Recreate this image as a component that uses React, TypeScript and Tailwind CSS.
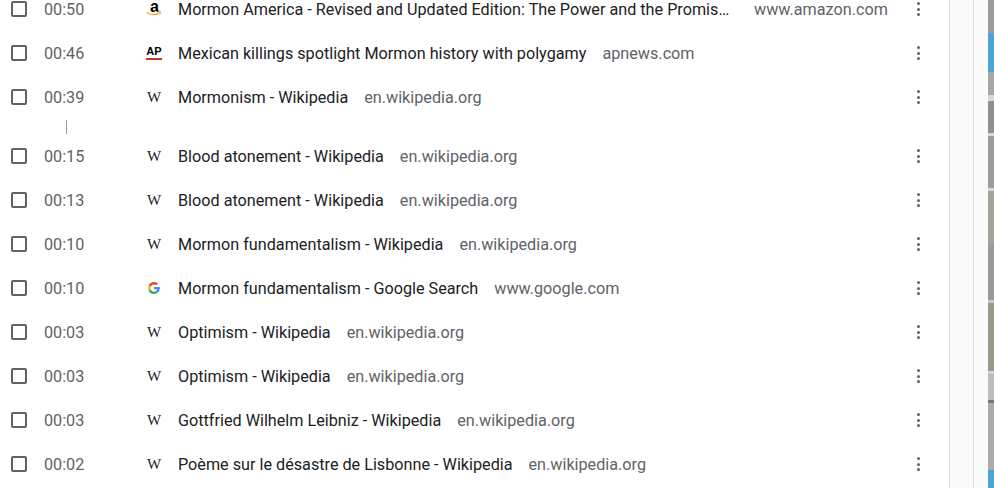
import React from "react";

type Site = "amazon" | "ap" | "wiki" | "google";

interface Visit {
  time: string;
  title: string;
  domain: string;
  site: Site;
  clipped?: boolean;
  gapAfter?: boolean;
}

const visits: Visit[] = [
  { time: "00:50", title: "Mormon America - Revised and Updated Edition: The Power and the Promis…", domain: "www.amazon.com", site: "amazon", clipped: true },
  { time: "00:46", title: "Mexican killings spotlight Mormon history with polygamy", domain: "apnews.com", site: "ap" },
  { time: "00:39", title: "Mormonism - Wikipedia", domain: "en.wikipedia.org", site: "wiki", gapAfter: true },
  { time: "00:15", title: "Blood atonement - Wikipedia", domain: "en.wikipedia.org", site: "wiki" },
  { time: "00:13", title: "Blood atonement - Wikipedia", domain: "en.wikipedia.org", site: "wiki" },
  { time: "00:10", title: "Mormon fundamentalism - Wikipedia", domain: "en.wikipedia.org", site: "wiki" },
  { time: "00:10", title: "Mormon fundamentalism - Google Search", domain: "www.google.com", site: "google" },
  { time: "00:03", title: "Optimism - Wikipedia", domain: "en.wikipedia.org", site: "wiki" },
  { time: "00:03", title: "Optimism - Wikipedia", domain: "en.wikipedia.org", site: "wiki" },
  { time: "00:03", title: "Gottfried Wilhelm Leibniz - Wikipedia", domain: "en.wikipedia.org", site: "wiki" },
  { time: "00:02", title: "Poème sur le désastre de Lisbonne - Wikipedia", domain: "en.wikipedia.org", site: "wiki" },
];

const strip = [
  "h-[33px] bg-[#9a9d9a]",
  "h-[39px] bg-[#4ea3d4]",
  "h-[23px] bg-[#a6a8a3]",
  "h-[6px] bg-[#d8d8d4]",
  "h-[32px] bg-[#8d918a]",
  "h-[3px] bg-[#d9d9d6]",
  "h-[52px] bg-[#9c9c9e]",
  "h-[3px] bg-[#d9d9d6]",
  "h-[53px] bg-[#a4a59a]",
  "h-[56px] bg-[#9a9a9c]",
  "h-[3px] bg-[#c9c9c6]",
  "h-[68px] bg-[#98998d]",
  "h-[3px] bg-[#d4d4d0]",
  "h-[26px] bg-[#bcbcb8]",
  "h-[3px] bg-[#77787a]",
  "h-[67px] bg-[#acaca6]",
  "h-[18px] bg-[#4ea3d4]",
];

const Favicon = ({ site }: { site: Site }): React.JSX.Element => {
  if (site === "amazon") {
    return (
      <span className="relative block w-4 h-4">
        <span className="absolute left-1 top-[-1px] text-[16px] leading-[14px] font-bold text-black font-['Liberation_Sans',sans-serif]">
          a
        </span>
        <svg viewBox="0 0 16 16" className="absolute inset-0 w-4 h-4">
          <path d="M.5 11.500c3.600 2.600 9.100 2.800 13 .3" fill="none" stroke="#f3a847" strokeWidth="1.400" />
          <path d="M11.600 10.900l2.900-.2-.7 2.800" fill="none" stroke="#f3a847" strokeWidth="1" />
        </svg>
      </span>
    );
  }
  if (site === "ap") {
    return (
      <span className="flex flex-col items-center w-4 h-4">
        <span className="text-[11px] leading-[12px] font-bold text-black font-['Liberation_Sans',sans-serif]">
          AP
        </span>
        <span className="w-4 h-[2px] mt-px bg-[#c8352f]" />
      </span>
    );
  }
  if (site === "google") {
    return (
      <span className="flex items-center justify-center w-4 h-4">
        <svg viewBox="0 0 48 48" className="w-3 h-3 block">
          <path fill="#EA4335" d="M24 9.500c3.500 0 6.700 1.200 9.200 3.600l6.900-6.900C35.900 2.400 30.400 0 24 0 14.600 0 6.500 5.400 2.600 13.200l8 6.200C12.400 13.700 17.700 9.500 24 9.500z" />
          <path fill="#4285F4" d="M46.900 24.500c0-1.600-.1-3.100-.4-4.500H24v9h12.900c-.6 3-2.200 5.500-4.800 7.200l7.700 6c4.500-4.200 7.100-10.300 7.100-17.700z" />
          <path fill="#FBBC05" d="M10.500 28.600c-.5-1.400-.8-3-.8-4.600s.3-3.200.8-4.600l-8-6.200C.9 16.400 0 20.100 0 24s.9 7.600 2.600 10.800l7.900-6.200z" />
          <path fill="#34A853" d="M24 48c6.500 0 11.900-2.100 15.900-5.800l-7.700-6c-2.200 1.400-4.900 2.300-8.200 2.300-6.300 0-11.600-4.200-13.500-9.900l-7.900 6.200C6.500 42.600 14.600 48 24 48z" />
        </svg>
      </span>
    );
  }
  return (
    <span className="block w-4 h-4 text-center text-[15px] leading-4 text-[#222] font-['Liberation_Serif',serif]">
      W
    </span>
  );
};

const Row = ({ visit }: { visit: Visit }): React.JSX.Element => (
  <div className="flex items-center h-[44px]">
    <span className="ml-[11px] w-4 h-4 shrink-0 rounded-[2px] border-2 border-[#5f6368]" />
    <span className="ml-[17px] pt-[2px] w-[102px] shrink-0 text-[#5f6368]">{visit.time}</span>
    <Favicon site={visit.site} />
    <div className="ml-4 pt-[2px] flex items-center min-w-0">
      <span className={visit.clipped ? "w-[560px] whitespace-nowrap text-[#202124]" : "whitespace-nowrap text-[#202124]"}>
        {visit.title}
      </span>
      <span className="ml-4 shrink-0 text-[#5f6368]">{visit.domain}</span>
    </div>
    <div className="ml-auto mr-[29px] flex flex-col gap-[2.5px]">
      <span className="w-[3px] h-[3px] rounded-full bg-[#5f6368]" />
      <span className="w-[3px] h-[3px] rounded-full bg-[#5f6368]" />
      <span className="w-[3px] h-[3px] rounded-full bg-[#5f6368]" />
    </div>
  </div>
);

const App = (): React.JSX.Element => {
  return (
    <div className="flex h-[488px] w-[994px] overflow-hidden bg-white font-['Roboto',sans-serif] text-[16.2px]">
      <div className="w-[949px] shrink-0 -mt-[13px]">
        {visits.map((visit, i) => (
          <React.Fragment key={i}>
            <Row visit={visit} />
            {visit.gapAfter && (
              <div className="h-[15px] pl-[66px] pt-px">
                <div className="w-px h-[14px] bg-[#9aa0a6]" />
              </div>
            )}
          </React.Fragment>
        ))}
      </div>
      <div className="w-[25px] shrink-0 bg-[#f8f9fa] border-x border-[#dadce0]" />
      <div className="flex-1 bg-[#fafafa] flex justify-end">
        <div className="w-[6px] flex flex-col">
          {strip.map((c, i) => (
            <div key={i} className={c} />
          ))}
        </div>
      </div>
    </div>
  );
};

export default App;
